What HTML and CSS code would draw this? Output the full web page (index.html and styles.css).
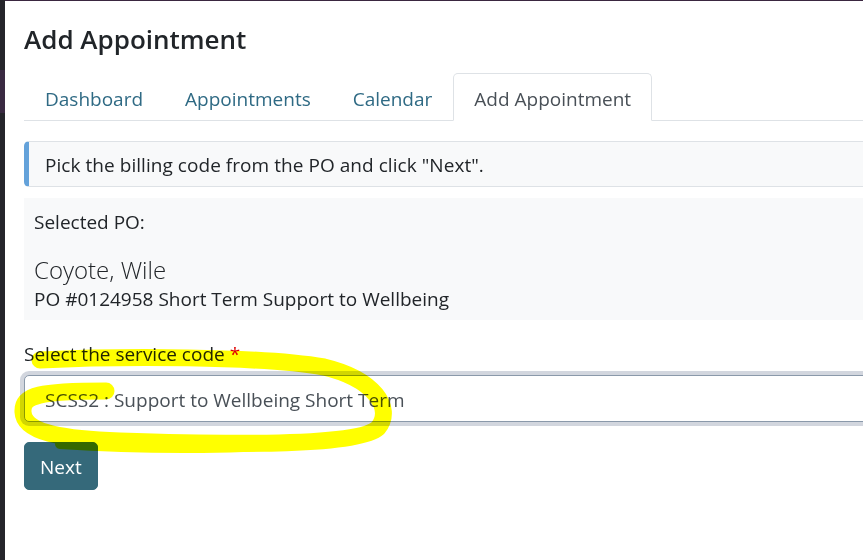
FILE: index.html
```html
<!DOCTYPE html>
<html lang="en">
<head>
<meta charset="utf-8">
<title>Add Appointment</title>
<link rel="stylesheet" href="styles.css">
</head>
<body>
<div class="frame">
  <aside class="side-strip"><span class="side-mark"></span></aside>
  <main class="page">
    <h1 class="title">Add Appointment</h1>
    <nav class="tabs">
      <a class="tab">Dashboard</a>
      <a class="tab">Appointments</a>
      <a class="tab">Calendar</a>
      <a class="tab active">Add Appointment</a>
    </nav>
    <div class="callout">Pick the billing code from the PO and click "Next".</div>
    <section class="po-panel">
      <p class="po-label">Selected PO:</p>
      <h2 class="po-name">Coyote, Wile</h2>
      <div class="po-line">PO #0124958 Short Term Support to Wellbeing</div>
    </section>
    <form class="form">
      <label class="field-label" for="code">Select the service code <span class="req">*</span></label>
      <select id="code" class="select">
        <option>SCSS2 : Support to Wellbeing Short Term</option>
      </select>
      <div class="actions"><button type="button" class="btn">Next</button></div>
    </form>
  </main>
</div>
<svg class="highlight" width="863" height="560" viewBox="0 0 863 560" aria-hidden="true">
  <path d="M40 360 C 120 356, 260 356, 324 367 C 374 379, 394 408, 378 428 C 358 446, 240 445, 120 441 C 60 439, 24 432, 23 412 C 22 395, 40 391, 106 391" fill="none" stroke="#ffff00" stroke-width="17" stroke-linecap="round" stroke-linejoin="round"/>
  <path d="M60 444 C 150 450, 260 450, 330 440" fill="none" stroke="#ffff00" stroke-width="10" stroke-linecap="round"/>
</svg>
</body>
</html>
```
FILE: styles.css
```css
html, body {
  margin: 0;
  padding: 0;
  background: #ffffff;
  overflow: hidden;
  height: 560px;
}

body {
  font-family: "Open Sans", "Noto Sans", sans-serif;
  color: #212529;
  position: relative;
}

.frame {
  display: flex;
  height: 560px;
}

.side-strip {
  flex: 0 0 5px;
  background: #25252b;
  display: flex;
  flex-direction: column;
  padding-top: 70px;
}

.side-mark {
  display: block;
  height: 43px;
  background: #3a2a42;
}

.page {
  flex: 0 0 1100px;
  border-top: 1px solid #3a2740;
  padding-left: 19px;
  box-sizing: border-box;
}

.title {
  margin: 20px 0 0;
  font-size: 26px;
  font-weight: 600;
  line-height: 36px;
  color: #212529;
}

.tabs {
  display: flex;
  margin-top: 16px;
  border-bottom: 1px solid #dee2e6;
  font-size: 19px;
  line-height: 30px;
}

.tab {
  padding: 10px 20px 6px;
  border: 1px solid transparent;
  border-top-left-radius: 5px;
  border-top-right-radius: 5px;
  margin-bottom: -1px;
  color: #2f6a84;
  text-decoration: none;
}

.tab.active {
  color: #495057;
  background: #ffffff;
  border-color: #dee2e6 #dee2e6 #ffffff;
}

.callout {
  margin-top: 20px;
  background: #f8f9fa;
  border-top: 1px solid #dee2e6;
  border-bottom: 1px solid #dee2e6;
  border-left: 5px solid #64a2da;
  border-radius: 5px 0 0 5px;
  padding: 8px 16px 6px;
  font-size: 19px;
  line-height: 30px;
  letter-spacing: 0.05px;
  color: #212529;
}

.po-panel {
  margin-top: 11px;
  background: #f8f9fa;
  padding: 9px 10px 6px;
  font-size: 19px;
  line-height: 30px;
}

.po-label {
  margin: 0 0 18px;
}

.po-name {
  margin: 0;
  font-size: 24px;
  font-weight: 300;
  line-height: 29px;
  color: #212529;
}

.po-line {
  margin: 0;
}

.form {
  margin: 19px 0 0;
  font-size: 19px;
  line-height: 30px;
}

.field-label {
  display: block;
  margin-bottom: 6px;
  color: #212529;
}

.req {
  color: #e00000;
}

.select {
  display: block;
  width: 1000px;
  height: 47px;
  box-sizing: border-box;
  padding: 3px 20px 0;
  font-family: inherit;
  font-size: 19px;
  color: #495057;
  background: #ffffff;
  border: 1px solid #8a99aa;
  border-radius: 5px;
  box-shadow: 0 0 0 4px #d2d6de;
  appearance: none;
  -webkit-appearance: none;
}

.actions {
  margin-top: 20px;
}

.btn {
  font-family: inherit;
  font-size: 19px;
  line-height: 30px;
  height: 48px;
  padding: 2px 15px 0;
  color: #ffffff;
  background: #35697a;
  border: 1px solid #35697a;
  border-radius: 5px;
}

.highlight {
  position: absolute;
  left: 0;
  top: 0;
  pointer-events: none;
  mix-blend-mode: multiply;
}
```
